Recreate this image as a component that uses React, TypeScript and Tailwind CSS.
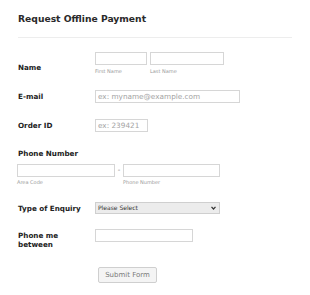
import { ReactNode } from 'react';

const font = { fontFamily: '"DejaVu Sans", Verdana, sans-serif' };

function Row({ label, height, labelPad, children }: { label: ReactNode; height: string; labelPad: string; children: ReactNode }) {
  return (
    <div className={`flex ${height}`}>
      <div className={`w-[77px] shrink-0 pr-[6px] text-[7.2px] font-bold leading-[9px] text-[#222] ${labelPad}`}>{label}</div>
      <div>{children}</div>
    </div>
  );
}

function Field({ width, placeholder }: { width: string; placeholder?: string }) {
  return (
    <input
      className={`block ${width} h-[13px] border border-[#d6d6d6] bg-white px-[2px] text-[7.3px] leading-[11px] text-[#333] placeholder:text-[#a3a3a3] outline-none`}
      placeholder={placeholder}
      style={font}
    />
  );
}

export default function App() {
  return (
    <div className="w-[310px] h-[295px] bg-white pl-[18px] pt-[13px] overflow-hidden" style={font}>
      <h1 className="text-[9.2px] font-bold leading-[11px] text-[#2a2a2a]">Request Offline Payment</h1>
      <div className="mt-[13px] h-px w-[274px] bg-[#ededed]" />

      <div className="mt-[14px]">
        <Row label="Name" height="h-[38px]" labelPad="pt-[11px]">
          <div className="flex gap-[3px]">
            <div>
              <Field width="w-[52px]" />
              <div className="mt-[3px] text-[5px] leading-[6px] text-[#9a9a9a]">First Name</div>
            </div>
            <div>
              <Field width="w-[74px]" />
              <div className="mt-[3px] text-[5px] leading-[6px] text-[#9a9a9a]">Last Name</div>
            </div>
          </div>
        </Row>

        <Row label="E-mail" height="h-[29px]" labelPad="pt-[2px]">
          <Field width="w-[145px]" placeholder="ex: myname@example.com" />
        </Row>

        <Row label="Order ID" height="h-[30px]" labelPad="pt-[2px]">
          <Field width="w-[53px]" placeholder="ex: 239421" />
        </Row>

        <div className="h-[15px] text-[7.2px] font-bold leading-[9px] text-[#222]">Phone Number</div>

        <div className="h-[38px] -ml-px">
          <div className="flex items-start">
            <div>
              <Field width="w-[98px]" />
              <div className="mt-[2px] text-[5px] leading-[6px] text-[#9a9a9a]">Area Code</div>
            </div>
            <div className="w-[8px] text-center text-[7px] leading-[13px] text-[#777]">-</div>
            <div>
              <Field width="w-[97px]" />
              <div className="mt-[2px] text-[5px] leading-[6px] text-[#9a9a9a]">Phone Number</div>
            </div>
          </div>
        </div>

        <Row label="Type of Enquiry" height="h-[27px]" labelPad="pt-[2px]">
          <div className="relative w-[125px] h-[12px]">
            <select
              className="block w-full h-full appearance-none border border-[#cfcfcf] bg-[#ececec] pl-[2px] text-[6px] leading-[10px] text-[#333] outline-none"
              style={font}
              defaultValue=""
            >
              <option value="">Please Select</option>
            </select>
            <svg className="absolute right-[4px] top-[4px] pointer-events-none" width="5" height="4" viewBox="0 0 5 4">
              <path d="M0.5 0.8 L2.5 3 L4.5 0.8" fill="none" stroke="#333" strokeWidth="1.2" />
            </svg>
          </div>
        </Row>

        <Row label="Phone me between" height="h-[38px]" labelPad="pt-[2px]">
          <Field width="w-[98px]" />
        </Row>

        <button
          className="block ml-[80px] w-[59px] h-[16px] rounded-[2px] border border-[#cfcfcf] bg-[#f4f4f4] text-[7px] leading-[14px] text-[#7a7a7a]"
          style={font}
        >
          Submit Form
        </button>
      </div>
    </div>
  );
}
